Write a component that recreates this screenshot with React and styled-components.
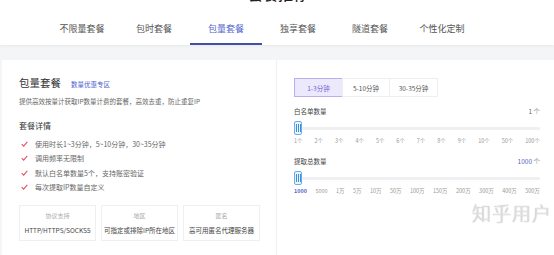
import React from 'react';
import styled, { createGlobalStyle } from 'styled-components';

const GlobalStyle = createGlobalStyle`
  html, body {
    margin: 0;
    padding: 0;
    background: #f4f5f7;
    overflow: hidden;
  }
  body {
    font-family: "Noto Sans CJK SC", "Noto Sans", "Liberation Sans", sans-serif;
    color: #333;
  }
`;

const Page = styled.div`
  position: relative;
  width: 554px;
  height: 255px;
  overflow: hidden;
`;

const Header = styled.div`
  background: #fff;
  height: 45px;
  box-shadow: 0 1px 3px rgba(0, 0, 0, 0.06);
  display: flex;
  flex-direction: column;
  align-items: center;
`;

const PageTitle = styled.div`
  font-size: 15px;
  font-weight: 500;
  line-height: 18px;
  margin-top: -15px;
  color: #222;
  padding-left: 2px;
`;

const Tabs = styled.div`
  display: flex;
  margin-top: 18px;
  margin-left: -30px;
`;

const Tab = styled.div`
  width: 72px;
  height: 24px;
  box-sizing: border-box;
  text-align: center;
  font-size: 9px;
  line-height: 16px;
  color: ${p => (p.$active ? '#5566cf' : '#555')};
  border-bottom: 2px solid ${p => (p.$active ? '#434fa6' : 'transparent')};
`;

const Body = styled.div`
  margin: 15px 0 0 2px;
  background: #fff;
  display: flex;
  height: 220px;
`;

const Left = styled.div`
  width: 275px;
  border-right: 1px solid #f0f0f2;
  padding: 15px 0 0 17px;
  box-sizing: border-box;
`;

const TitleRow = styled.div`
  display: flex;
  align-items: baseline;
  gap: 10px;
`;

const Title = styled.div`
  font-size: 10.5px;
  color: #333;
`;

const Promo = styled.div`
  font-size: 6.5px;
  color: #4a60d0;
`;

const Desc = styled.div`
  font-size: 6.5px;
  color: #666;
  margin-top: 6px;
`;

const SubTitle = styled.div`
  font-size: 8px;
  color: #333;
  margin-top: 14px;
`;

const List = styled.div`
  display: flex;
  flex-direction: column;
  gap: 5.5px;
  margin-top: 8px;
`;

const Item = styled.div`
  display: flex;
  align-items: center;
  font-size: 7px;
  color: #666;
  height: 9px;
`;

const Check = styled.svg`
  width: 7px;
  height: 6px;
  margin: 0 7px 0 2px;
`;

const Boxes = styled.div`
  display: flex;
  gap: 5px;
  margin-top: 13px;
`;

const Box = styled.div`
  width: 77px;
  height: 36px;
  border: 1px solid #efeff1;
  box-sizing: border-box;
  display: flex;
  flex-direction: column;
  align-items: center;
  justify-content: center;
  gap: 5px;
`;

const BoxLabel = styled.div`
  font-size: 6px;
  color: #aaa;
`;

const BoxValue = styled.div`
  font-size: 6.5px;
  color: #444;
  white-space: nowrap;
`;

const Right = styled.div`
  flex: 1;
  padding: 18px 14px 0 17px;
`;

const BtnGroup = styled.div`
  display: flex;
`;

const Btn = styled.div`
  width: ${p => p.$w}px;
  height: 19px;
  box-sizing: border-box;
  border: 1px solid ${p => (p.$active ? '#b9aef2' : '#eee')};
  margin-left: ${p => (p.$first ? 0 : -1)}px;
  background: ${p => (p.$active ? '#ece9fd' : '#fff')};
  color: ${p => (p.$active ? '#6f5fd8' : '#555')};
  font-size: 6.5px;
  display: flex;
  align-items: center;
  justify-content: center;
`;

const Field = styled.div`
  margin-top: ${p => p.$top}px;
`;

const FieldHead = styled.div`
  display: flex;
  justify-content: space-between;
  font-size: 6.5px;
  color: #444;
`;

const Value = styled.span`
  color: #999;
  span {
    color: ${p => (p.$accent ? '#5a5fc8' : '#666')};
  }
`;

const SliderRow = styled.div`
  display: flex;
  align-items: center;
  margin-top: 5px;
`;

const Thumb = styled.div`
  width: 8px;
  height: 14px;
  box-sizing: border-box;
  border: 1px solid #6aaee8;
  border-radius: 2px;
  background: #eaf4fd;
  display: flex;
  justify-content: center;
  align-items: center;
  gap: 1px;
  flex-shrink: 0;
  span {
    width: 1px;
    height: 8px;
    background: #3b8fdc;
  }
`;

const Track = styled.div`
  flex: 1;
  height: 3px;
  background: #f0f0f2;
  border-radius: 2px;
`;

const Ticks = styled.div`
  display: flex;
  justify-content: space-between;
  margin-top: 2px;
  font-size: 5.5px;
  color: #999;
`;

const Tick = styled.span`
  color: ${p => (p.$active ? '#5a5fc8' : '#999')};
  font-weight: ${p => (p.$active ? 700 : 400)};
`;

const Watermark = styled.div`
  position: absolute;
  right: 2px;
  top: 199px;
  font-size: 19px;
  font-weight: 300;
  letter-spacing: 1px;
  color: #e2e2e2;
  text-shadow: 0 0 1px #9a9a9a;
`;

const tabs = ['不限量套餐', '包时套餐', '包量套餐', '独享套餐', '隧道套餐', '个性化定制'];
const details = [
  '使用时长1~3分钟，5~10分钟，30~35分钟',
  '调用频率无限制',
  '默认白名单数量5个，支持账密验证',
  '每次提取IP数量自定义',
];
const boxes = [
  ['协议支持', 'HTTP/HTTPS/SOCKS5'],
  ['地区', '可指定或排除IP所在地区'],
  ['匿名', '高可用匿名代理服务器'],
];
const countTicks = ['1个', '2个', '3个', '4个', '5个', '6个', '7个', '8个', '9个', '10个', '50个', '100个'];
const totalTicks = ['1000', '5000', '1万', '5万', '10万', '50万', '100万', '150万', '200万', '300万', '400万', '500万'];

const Slider = () => (
  <SliderRow>
    <Thumb>
      <span />
      <span />
      <span />
    </Thumb>
    <Track />
  </SliderRow>
);

const App = () => (
  <Page>
    <GlobalStyle />
    <Header>
      <PageTitle>套餐推荐</PageTitle>
      <Tabs>
        {tabs.map(t => (
          <Tab key={t} $active={t === '包量套餐'}>
            {t}
          </Tab>
        ))}
      </Tabs>
    </Header>
    <Body>
      <Left>
        <TitleRow>
          <Title>包量套餐</Title>
          <Promo>数量优惠专区</Promo>
        </TitleRow>
        <Desc>提供高效按量计获取IP数量计费的套餐，高效去重，防止重复IP</Desc>
        <SubTitle>套餐详情</SubTitle>
        <List>
          {details.map(d => (
            <Item key={d}>
              <Check viewBox="0 0 10 8">
                <path d="M1 4.2 L3.8 7 L9 1" fill="none" stroke="#e4536a" strokeWidth="1.6" />
              </Check>
              {d}
            </Item>
          ))}
        </List>
        <Boxes>
          {boxes.map(([label, value]) => (
            <Box key={label}>
              <BoxLabel>{label}</BoxLabel>
              <BoxValue>{value}</BoxValue>
            </Box>
          ))}
        </Boxes>
      </Left>
      <Right>
        <BtnGroup>
          <Btn $w={49} $first $active>1-3分钟</Btn>
          <Btn $w={48}>5-10分钟</Btn>
          <Btn $w={49}>30-35分钟</Btn>
        </BtnGroup>
        <Field $top={9}>
          <FieldHead>
            <span>白名单数量</span>
            <Value><span>1</span> 个</Value>
          </FieldHead>
          <Slider />
          <Ticks>
            {countTicks.map(t => (
              <Tick key={t}>{t}</Tick>
            ))}
          </Ticks>
        </Field>
        <Field $top={11}>
          <FieldHead>
            <span>提取总数量</span>
            <Value $accent><span>1000</span> 个</Value>
          </FieldHead>
          <Slider />
          <Ticks>
            {totalTicks.map((t, i) => (
              <Tick key={t} $active={i === 0}>{t}</Tick>
            ))}
          </Ticks>
        </Field>
      </Right>
    </Body>
    <Watermark>知乎用户</Watermark>
  </Page>
);

export default App;
